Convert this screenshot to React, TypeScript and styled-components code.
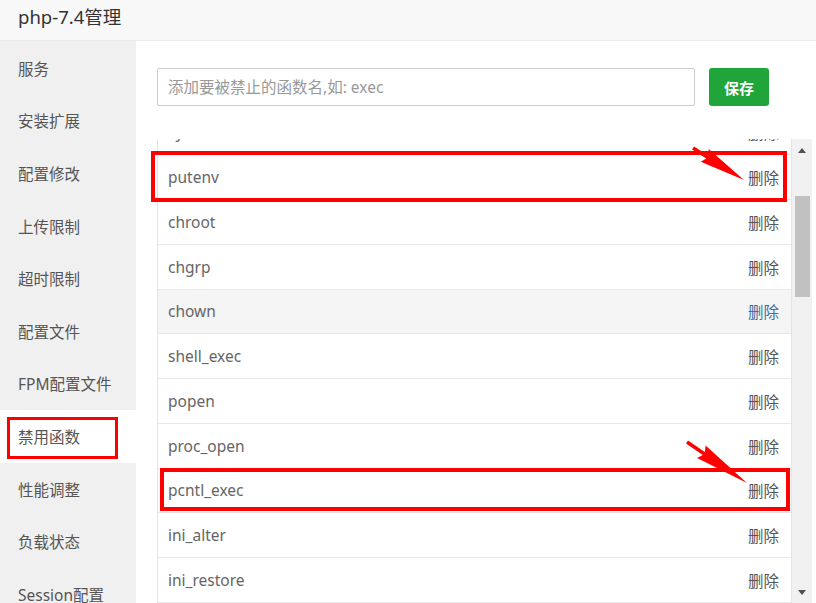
import React, { useEffect, useRef } from "react";
import styled, { createGlobalStyle } from "styled-components";

const Global = createGlobalStyle`
  html, body { margin: 0; padding: 0; background: #fff; }
  body { font-family: "Noto Sans", "Noto Sans CJK SC", sans-serif; }
  * { box-sizing: border-box; }
`;

const Page = styled.div`
  position: relative;
  width: 816px;
  height: 603px;
  overflow: hidden;
  display: flex;
  flex-direction: column;
  background: #fff;
`;

const Header = styled.div`
  height: 41px;
  flex: none;
  background: #f8f8f8;
  border-bottom: 1px solid #ececec;
  display: flex;
  align-items: center;
  padding: 0 0 9px 18px;
  font-size: 18.5px;
  color: #333;
`;

const Body = styled.div`
  flex: 1;
  display: flex;
  min-height: 0;
`;

const Sidebar = styled.div`
  width: 136px;
  flex: none;
  background: #f0f0f0;
  padding-top: 1px;
  display: flex;
  flex-direction: column;
`;

const NavItem = styled.div<{ $active?: boolean }>`
  height: 52.6px;
  flex: none;
  display: flex;
  align-items: center;
  padding-left: 18px;
  font-size: 15.5px;
  color: #555;
  white-space: nowrap;
  background: ${(p) => (p.$active ? "#fff" : "transparent")};
`;

const Main = styled.div`
  flex: 1;
  display: flex;
  flex-direction: column;
  padding: 27px 4px 0 21px;
  min-width: 0;
`;

const Form = styled.div`
  display: flex;
  gap: 14px;
  height: 38px;
  flex: none;
`;

const Input = styled.input`
  width: 538px;
  height: 38px;
  border: 1px solid #ccc;
  border-radius: 2px;
  padding: 0 10px;
  font-size: 15.5px;
  font-family: "Noto Sans", "Noto Sans CJK SC", sans-serif;
  color: #555;
  outline: none;
  &::placeholder { color: #999; }
`;

const SaveButton = styled.button`
  width: 60px;
  height: 38px;
  border: none;
  border-radius: 3px;
  background: #20a53a;
  color: #fff;
  font-size: 15px;
  font-weight: bold;
  font-family: "Noto Sans CJK SC", sans-serif;
  padding: 0;
`;

const ListWrap = styled.div`
  margin-top: 33px;
  flex: 1;
  display: flex;
  min-height: 0;
`;

const List = styled.div`
  flex: 1;
  overflow: hidden;
  border-left: 1px solid #e4e4e4;
  border-right: 1px solid #e4e4e4;
`;

const Row = styled.div<{ $hover?: boolean }>`
  height: 44.75px;
  display: flex;
  align-items: center;
  justify-content: space-between;
  padding: 0 12px 0 10px;
  border-bottom: 1px solid #e8e8e8;
  background: ${(p) => (p.$hover ? "#f5f5f5" : "#fff")};
  font-size: 15.5px;
  color: #666;
`;

const DelLink = styled.span<{ $hover?: boolean }>`
  font-family: "Noto Sans CJK SC", sans-serif;
  font-size: 15.5px;
  color: ${(p) => (p.$hover ? "#3a6ea5" : "#555")};
`;

const Scrollbar = styled.div`
  width: 20px;
  flex: none;
  background: #f1f1f1;
  display: flex;
  flex-direction: column;
  align-items: center;
`;

const ArrowBtn = styled.div`
  height: 22px;
  width: 100%;
  display: flex;
  align-items: center;
  justify-content: center;
  flex: none;
`;

const Track = styled.div`
  flex: 1;
  width: 100%;
  position: relative;
`;

const Thumb = styled.div`
  position: absolute;
  left: 3px;
  right: 2px;
  top: 35px;
  height: 101px;
  background: #c1c1c1;
`;

const RedBox = styled.div`
  position: absolute;
  border: 4px solid #f00;
  pointer-events: none;
`;

const Overlay = styled.svg`
  position: absolute;
  left: 0;
  top: 0;
  pointer-events: none;
`;

const items = [
  "服务",
  "安装扩展",
  "配置修改",
  "上传限制",
  "超时限制",
  "配置文件",
  "FPM配置文件",
  "禁用函数",
  "性能调整",
  "负载状态",
  "Session配置",
];

const funcs = [
  "passthru",
  "exec",
  "system",
  "putenv",
  "chroot",
  "chgrp",
  "chown",
  "shell_exec",
  "popen",
  "proc_open",
  "pcntl_exec",
  "ini_alter",
  "ini_restore",
  "dl",
  "openlog",
  "syslog",
  "readlink",
  "symlink",
];

function arrowPoints(tx: number, ty: number, px: number, py: number) {
  const dx = px - tx;
  const dy = py - ty;
  const len = Math.hypot(dx, dy);
  const ux = dx / len;
  const uy = dy / len;
  const nx = -uy;
  const ny = ux;
  const bx = tx + dx * 0.28;
  const by = ty + dy * 0.28;
  const sw = 1.8;
  const hw = 7.5;
  const pts = [
    [tx + nx * sw, ty + ny * sw],
    [bx + nx * sw, by + ny * sw],
    [bx + nx * hw - ux * 3, by + ny * hw - uy * 3],
    [px, py],
    [bx - nx * hw - ux * 3, by - ny * hw - uy * 3],
    [bx - nx * sw, by - ny * sw],
    [tx - nx * sw, ty - ny * sw],
  ];
  return pts.map((p) => p.map((v) => v.toFixed(1)).join(",")).join(" ");
}

export default function App() {
  const listRef = useRef<HTMLDivElement>(null);
  useEffect(() => {
    if (listRef.current) listRef.current.scrollTop = 118;
  }, []);
  return (
    <Page>
      <Global />
      <Header>php-7.4管理</Header>
      <Body>
        <Sidebar>
          {items.map((t) => (
            <NavItem key={t} $active={t === "禁用函数"}>
              {t}
            </NavItem>
          ))}
        </Sidebar>
        <Main>
          <Form>
            <Input placeholder="添加要被禁止的函数名,如: exec" />
            <SaveButton>保存</SaveButton>
          </Form>
          <ListWrap>
            <List ref={listRef}>
              {funcs.map((f) => (
                <Row key={f} $hover={f === "chown"}>
                  <span>{f}</span>
                  <DelLink $hover={f === "chown"}>删除</DelLink>
                </Row>
              ))}
            </List>
            <Scrollbar>
              <ArrowBtn>
                <svg width="8" height="5" viewBox="0 0 8 5">
                  <polygon points="0,5 8,5 4,0" fill="#505050" />
                </svg>
              </ArrowBtn>
              <Track>
                <Thumb />
              </Track>
              <ArrowBtn>
                <svg width="8" height="5" viewBox="0 0 8 5">
                  <polygon points="0,0 8,0 4,5" fill="#505050" />
                </svg>
              </ArrowBtn>
            </Scrollbar>
          </ListWrap>
        </Main>
      </Body>
      <RedBox style={{ left: 7, top: 417, width: 111, height: 42, borderWidth: 3 }} />
      <RedBox style={{ left: 151, top: 151, width: 636, height: 51 }} />
      <RedBox style={{ left: 160, top: 468, width: 630, height: 43 }} />
      <Overlay width="816" height="603" viewBox="0 0 816 603">
        <polygon points={arrowPoints(693, 148, 744, 180)} fill="#f00" />
        <polygon points={arrowPoints(687, 442, 747, 483)} fill="#f00" />
      </Overlay>
    </Page>
  );
}
